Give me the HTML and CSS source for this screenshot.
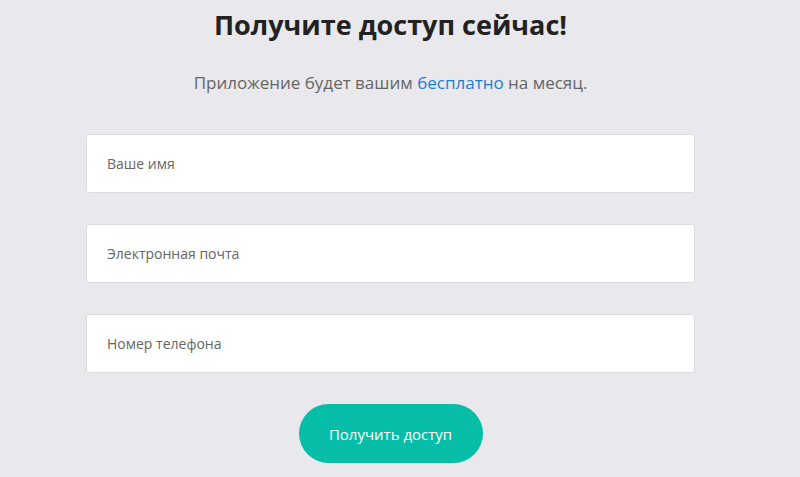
FILE: index.html
```html
<!DOCTYPE html>
<html lang="ru">
<head>
    <meta charset="UTF-8">
    <title>Получите доступ сейчас!</title>
    <link rel="stylesheet" href="styles.css">
</head>
<body>
<div class="access">
    <h2 class="access-title">Получите доступ сейчас!</h2>
    <p class="access-text">Приложение будет вашим <a href="#">бесплатно</a> на месяц.</p>
    <form class="access-form">
        <input class="field" type="text" placeholder="Ваше имя">
        <input class="field" type="email" placeholder="Электронная почта">
        <input class="field" type="tel" placeholder="Номер телефона">
        <button class="btn" type="button">Получить доступ</button>
    </form>
</div>
</body>
</html>
```

FILE: styles.css
```css
*{
    padding: 0;
    margin: 0;
    box-sizing: border-box;
}
body{
    background: #e9e8ec;
    font-family: "Open Sans", "Noto Sans", sans-serif;
}
.access{
    width: 609px;
    margin-left: 86px;
    text-align: center;
}
.access-title{
    font-size: 27px;
    font-weight: 700;
    color: #222;
    line-height: 40px;
    padding-top: 5px;
}
.access-text{
    font-size: 17px;
    color: #666;
    line-height: 24px;
    margin-top: 26px;
}
.access-text a{
    color: #1d7fd0;
    text-decoration: none;
}
.access-form{
    display: flex;
    flex-direction: column;
    align-items: center;
    gap: 31px;
    margin-top: 39px;
}
.field{
    display: block;
    width: 100%;
    height: 59px;
    background: #fff;
    border: 1px solid #dcdcdf;
    border-radius: 3px;
    padding: 0 20px;
    font-family: inherit;
    font-size: 14px;
    color: #333;
    outline: none;
}
.field::placeholder{
    color: #666;
}
.btn{
    width: 184px;
    height: 59px;
    border: none;
    border-radius: 30px;
    background: #06bea8;
    color: #fff;
    font-family: inherit;
    font-size: 15px;
    cursor: pointer;
}
```
